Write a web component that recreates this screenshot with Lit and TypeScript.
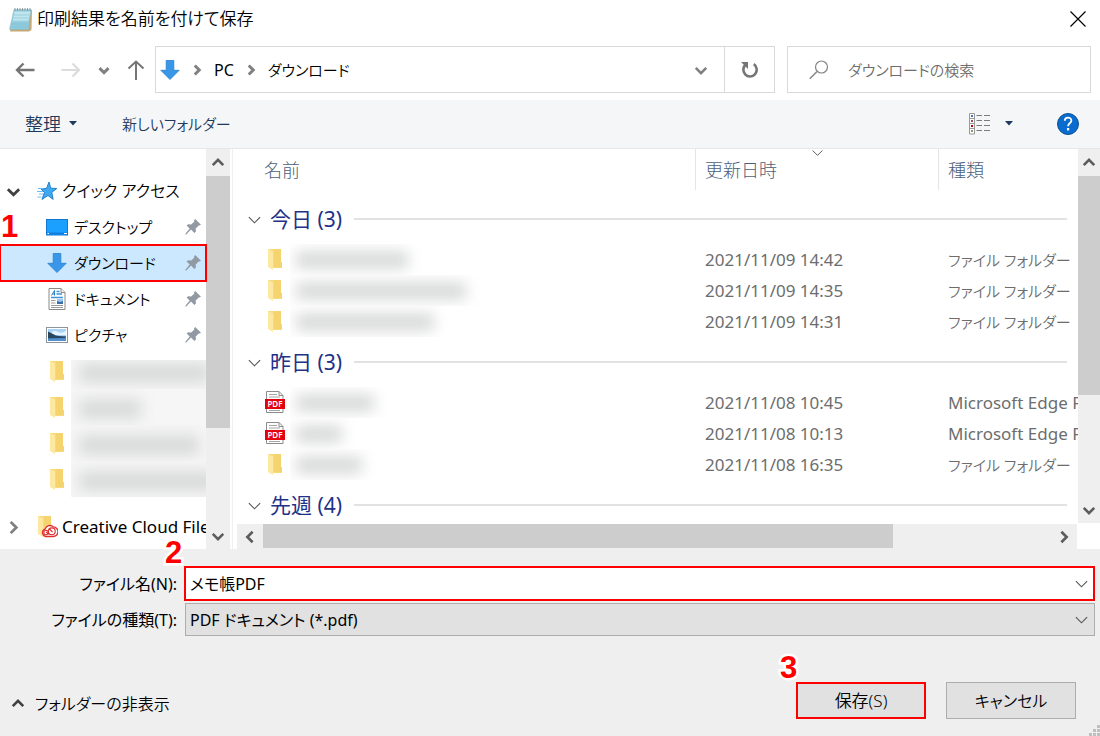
import { LitElement, html, css, svg, nothing } from "lit";
import { customElement, state } from "lit/decorators.js";
import { classMap } from "lit/directives/class-map.js";

type Icon = "folder" | "pdf";
interface FileRow { icon: Icon; blur: number; date: string; type: string; }
interface Group { name: string; rows: FileRow[]; }

const FOLDER_TYPE = "ファイル フォルダー";
const PDF_TYPE = "Microsoft Edge PDF Document";

const GROUPS: Group[] = [
  {
    name: "今日 (3)",
    rows: [
      { icon: "folder", blur: 112, date: "2021/11/09 14:42", type: FOLDER_TYPE },
      { icon: "folder", blur: 170, date: "2021/11/09 14:35", type: FOLDER_TYPE },
      { icon: "folder", blur: 138, date: "2021/11/09 14:31", type: FOLDER_TYPE },
    ],
  },
  {
    name: "昨日 (3)",
    rows: [
      { icon: "pdf", blur: 78, date: "2021/11/08 10:45", type: PDF_TYPE },
      { icon: "pdf", blur: 46, date: "2021/11/08 10:13", type: PDF_TYPE },
      { icon: "folder", blur: 66, date: "2021/11/08 16:35", type: FOLDER_TYPE },
    ],
  },
  { name: "先週 (4)", rows: [] },
];

const chevron = (dir: "up" | "down" | "left" | "right", cls = "") => {
  const d = {
    up: "M2 10.5 L8 4.5 L14 10.5",
    down: "M2 5.5 L8 11.5 L14 5.5",
    left: "M11 2 L5 8 L11 14",
    right: "M5 2 L11 8 L5 14",
  }[dir];
  return html`<svg class="chev ${cls}" viewBox="0 0 16 16" aria-hidden="true"><path d=${d} /></svg>`;
};

const downArrow = html`<svg width="20" height="20" viewBox="0 0 20 20" aria-hidden="true">
  <path d="M6.2 .5h7.6v9.8h5.4L10 19.5 .8 10.3h5.4z" fill="#3a97e8" stroke="#2580d2" stroke-width=".8" />
</svg>`;

const folderShape = svg`
  <path d="M2 0h13v13h1v6H5z" fill="#f8da7c" />
  <path d="M8 0h7v13h1v5H8z" fill="#f3cf66" opacity=".6" />
  <path d="M2 0l5 2.500v18.500L2 18z" fill="#fde8a2" />`;

const folderIcon = html`<svg width="18" height="22" viewBox="0 0 18 22" aria-hidden="true">${folderShape}</svg>`;

const pdfIcon = html`<svg class="pdf" width="20" height="23" viewBox="0 0 20 23" aria-hidden="true">
  <path d="M1.5 .5h12.500l4 4v17h-16.500z" fill="#fff" stroke="#8b8b8b" />
  <path d="M14 .5v4h4" fill="none" stroke="#8b8b8b" />
  <path d="M4 3.500h8M4 6h11M4 19.500h11" stroke="#a5a5a5" />
  <rect x="0" y="8" width="20" height="10" fill="#e3000f" />
  <text x="10" y="16" text-anchor="middle" font-size="8" font-weight="600" fill="#fff">PDF</text>
</svg>`;

const pinIcon = html`<svg class="pin" width="16" height="16" viewBox="0 0 16 16" aria-hidden="true">
  <path d="M10.200 0 16 5.800l-1.500.8-.8-.2-3 3 .2 3-1.500 1.500-3.400-3.300L1 15.700.2 15l4.500-5.400L1.600 6.600l1.500-1.400 3.100.2 3.200-3-.4-1.200z" fill="#919aa3" />
</svg>`;

const starIcon = html`<svg width="20" height="20" viewBox="0 0 20 20" aria-hidden="true">
  <path d="M12 1l1.800 6.200 6 .3-5 3.900 1.400 7-5.200-3.900-6 3.900 2.400-6.900L4 8l5.500-.6z" fill="#3fa9f0" stroke="#1a78c8" stroke-width=".9" />
  <path d="M1 7.500h5M0 10.500h6M2 13h4M.5 16h4" stroke="#6cbdf2" stroke-width="1" />
</svg>`;

const desktopIcon = html`<svg width="22" height="17" viewBox="0 0 22 17" aria-hidden="true">
  <rect x=".5" y=".5" width="21" height="15.500" fill="#1ba0ff" stroke="#1278d0" />
  <path d="M1 13.500h20v2H1z" fill="#0d7fe0" />
  <path d="M1.500 14.500h1.500M18 14.500h3" stroke="#fff" stroke-width="1" />
</svg>`;

const docIcon = html`<svg width="18" height="22" viewBox="0 0 18 22" aria-hidden="true">
  <path d="M1 .5h12l4 4v17H1z" fill="#fff" stroke="#8a8a8a" />
  <path d="M13 .5v4h4" fill="#eee" stroke="#8a8a8a" />
  <path d="M3.500 7.500 6.500 2.500M6.500 2.500v5M4.500 6h2" stroke="#2b7fc4" fill="none" />
  <path d="M8.500 3.500h3M8.500 6h5.500M3 9.500h12" stroke="#3f93d6" stroke-width="1.300" />
  <path d="M3 12.500h4.500M3 15h4.500M3 17.500h12M3 19.500h12" stroke="#9a9a9a" />
  <rect x="9" y="11" width="6" height="5" fill="#3a6ea5" />
  <path d="M9 13l3 1 3-1v-2H9z" fill="#9cc8ee" />
</svg>`;

const pictureIcon = html`<svg width="22" height="16" viewBox="0 0 22 16" aria-hidden="true">
  <rect x=".5" y=".5" width="21" height="15" fill="#fff" stroke="#8d949b" />
  <rect x="2" y="2" width="18" height="12" fill="#a9d3f5" />
  <path d="M6 5q3-2 6 0t8-1v4H6z" fill="#e8f4fd" />
  <path d="M2 9h18v5H2z" fill="#3d78b4" />
  <path d="M2 4.500 5 6l5 2.500 9 1.500v1H2z" fill="#28475c" />
  <path d="M2 12l18-1v3H2z" fill="#5590cc" />
</svg>`;

const notepadIcon = html`<svg width="24" height="25" viewBox="0 0 24 25" aria-hidden="true">
  <path d="M6 3h17l-.5 20-2.500 1.500H1z" fill="#c9a878" />
  <path d="M5 2.500h17L19.500 22.500H.5z" fill="#8fcbdc" stroke="#7fb4c4" stroke-width=".5" />
  <path d="M5.500 4.500h16l-2 10H3.500z" fill="#bfe6ee" />
  <path d="M5 8h15.500M4.500 11h15.500M4 14h15.500M3 17h15.500M2.500 20h16" stroke="#7fc2d4" stroke-width=".6" />
  <path d="M6 1v3M8.500 1v3M11 1v3M13.500 1v3M16 1v3M18.500 1v3M21 1v3" stroke="#8f9ca2" />
</svg>`;

const creativeIcon = html`<svg width="22" height="22" viewBox="0 0 22 22" aria-hidden="true">
  ${folderShape}
  <g fill="none" stroke="#e02d2d">
    <path d="M9.500 20.500a4 4 0 0 1-.3-7.600 5 5 0 0 1 8.200-2 4.800 4.800 0 0 1-.4 9.600z" fill="#fff" stroke-width="1.300" />
    <circle cx="10" cy="16.500" r="2.200" stroke-width="1.100" />
    <circle cx="15.800" cy="15.300" r="3.400" stroke-width="1.100" />
    <path d="M10 16l3.500 2.500M13 12.500l3.500 3.500" stroke-width="1.100" />
  </g>
</svg>`;

const viewIcon = html`<svg width="22" height="22" viewBox="0 0 22 22" aria-hidden="true">
  <path d="M.5.5h5v20.500h-5zM.5 5.500h5M.5 10.500h5M.5 15.500h5" fill="#fff" stroke="#9a9a9a" />
  <path d="M2 3h2" stroke="#3c76c0" stroke-width="2" />
  <path d="M2 8h2" stroke="#a05050" stroke-width="2" />
  <path d="M2 13h2" stroke="#c00000" stroke-width="2" />
  <path d="M2 18h2" stroke="#8a9a70" stroke-width="2" />
  <path d="M7.500 2.500h5.500M15 2.500h6M7.500 7.500h5.500M15 7.500h6M7.500 12.500h5.500M15 12.500h6M7.500 17.500h5.500M15 17.500h6" stroke="#7c7c7c" />
</svg>`;

const caret = html`<svg width="8" height="5" viewBox="0 0 8 5" aria-hidden="true"><path d="M0 0h8L4 4.500z" fill="#1e395b" /></svg>`;

@customElement("app-root")
export class AppRoot extends LitElement {
  @state() private selected = "ダウンロード";

  static styles = css`
    :host {
      display: block;
      font: 350 16px/24px "Noto Sans", "Noto Sans CJK JP", sans-serif;
      font-feature-settings: "palt";
      color: #000;
      background: #efefef;
    }
    * { box-sizing: border-box; }
    button, input, select {
      font: inherit;
      font-feature-settings: inherit;
      color: inherit;
      background: none;
      border: 0;
      border-radius: 0;
      margin: 0;
      padding: 0;
    }
    button { display: inline-flex; align-items: center; justify-content: center; white-space: nowrap; }
    svg { display: block; flex: none; }
    h1 { font: inherit; margin: 0; }
    .dialog { display: flex; flex-direction: column; min-height: 100vh; }
    .chev { width: 14px; height: 14px; fill: none; stroke: #5c5c5c; stroke-width: 3; }
    .thin { stroke-width: 1.2; stroke: #555; }
    .small { width: 12px; height: 12px; stroke-width: 4; }
    .dark { stroke: #404040; }

    .title { display: flex; align-items: center; gap: 4px; height: 38px; padding: 0 14px 0 9px; background: #fff; }
    .title h1 { flex: 1; font-size: 17px; }

    .nav { display: flex; align-items: stretch; padding: 8px 9px 7px 0; background: #fff; }
    .history { display: grid; grid-template-columns: 50px 41px 26px 38px; align-items: center; }
    .history button { height: 47px; }
    .address { flex: 1; display: flex; height: 47px; border: 1px solid #d9d9d9; margin-right: 12px; }
    .crumbs { flex: 1; display: flex; align-items: center; gap: 11px; padding-left: 4px; }
    .crumbs .chev, .gray { stroke: #808080; }
    .drop { width: 47px; }
    .refresh { width: 50px; border-left: 1px solid #d9d9d9; }
    .search { display: flex; align-items: center; gap: 19px; width: 304px; height: 47px; padding: 0 21px; border: 1px solid #d9d9d9; }
    .search input { flex: 1; min-width: 0; height: 30px; outline: 0; }
    .search input::placeholder { color: #6d6d6d; opacity: 1; }
    .kana, .child, .search input, .row td { font-size: 15px; }

    .toolbar { display: flex; align-items: center; height: 49px; padding: 0 21px 1px 25px; background: #f5f6f8; border-bottom: 1px solid #e5e7ea; color: #1e395b; }
    .toolbar button { gap: 8px; }
    .toolbar .organize { margin-right: 45px; font-size: 18px; }
    .view { margin-left: auto; margin-right: 44px; }
    .toolbar .view { gap: 14px; }
    .help { width: 22px; height: 22px; }

    .main { display: flex; height: 400px; background: #fff; }
    .side { display: flex; width: 233px; border-right: 1px solid #f0f0f0; }
    .tree { flex: 1; min-width: 0; padding: 24px 0 0; margin: 0; list-style: none; }
    .tree li { position: relative; display: flex; height: 36px; }
    .tree li.gap { margin-top: 12px; font-size: 17px; font-weight: 400; }
    .node { display: flex; flex: 1; min-width: 0; height: 36px; align-items: center; justify-content: flex-start; }
    .root { padding-left: 6px; }
    .exp { flex: none; width: 30px; }
    .exp .chev { width: 15px; height: 15px; }
    .ico { display: flex; flex: none; justify-content: center; }
    .root .ico { width: 22px; margin-right: 4px; }
    .root .label { overflow: hidden; }
    .child { padding: 0 5px 0 45px; }
    .child .ico { width: 23px; margin-right: 6px; }
    .child .label { flex: 1; text-align: left; }
    .sel { background: #cce8ff; outline: 2px solid #f00; outline-offset: -1px; }

    .smudge { height: 36px; flex: 1; overflow: hidden; background: #f6f6f6; margin-left: -3px; margin-right: -5px; }
    .smudge i { display: block; height: 20px; margin: 10px 0 0 8px; background: #d9dada; filter: blur(7px); }
    .tree .hidden .ico { padding-top: 2px; }
    .hidden.first .smudge { height: 29px; align-self: flex-end; }
    .hidden.first .smudge i { margin-top: 3px; }

    .vbar { display: flex; flex-direction: column; background: #efefef; }
    .side .vbar { width: 24px; margin-right: 2px; }
    .vbar button { height: 27px; }
    .thumb { background: #cdcdcd; }
    .spacer { flex: 1; }
    .side .thumb { height: 252px; }

    .files { flex: 1; min-width: 0; display: grid; grid-template-columns: minmax(0, 1fr) 22px; grid-template-rows: 375px 25px; padding-left: 4px; }
    .list { overflow: hidden; }
    .files .vbar { margin-bottom: 1px; }
    .files .thumb { height: 219px; }
    .hbar { display: flex; background: #efefef; margin-right: 1px; }
    .hbar button { width: 26px; }
    .files .hbar .thumb { flex: 4; height: 24px; }
    .corner { background: #fff; }

    table { border-collapse: collapse; table-layout: fixed; width: 100%; color: #6d6d6d; }
    .c-name { width: 458px; }
    .c-date { width: 243px; }
    th, td { padding: 0; text-align: left; font-weight: inherit; white-space: nowrap; }
    thead th { height: 45px; color: #4c607a; font-size: 18px; font-weight: 300; vertical-align: top; }
    .head { position: relative; display: flex; align-items: center; height: 41px; padding-left: 9px; border-left: 1px solid #e5e5e5; }
    .c-name .head { padding-left: 27px; border: 0; }
    .sort { position: absolute; top: -3px; left: calc(50% - 6px); width: 13px; height: 13px; }
    .group { display: flex; align-items: center; height: 50px; padding-right: 11px; color: #1e3287; font-size: 21px; }
    .group button { gap: 8px; padding-left: 10px; font-weight: 400; }
    .group::after { content: ""; flex: 1; height: 2px; margin-left: 12px; background: #e2e2e2; }
    .group .chev { width: 15px; height: 15px; }
    .row td { height: 31px; padding-left: 10px; }
    .row .latin { font-size: 17px; }
    .latin { font-weight: 400; }
    .row .cell { padding-left: 28px; }
    .file { display: flex; align-items: center; height: 31px; }
    .file svg { width: 20px; }
    .file .smudge { height: 31px; margin: 0 0 0 5px; background: none; }
    .file .smudge i { height: 18px; margin: 7px 0 0 6px; }
    .pdf { font-family: "Noto Sans", sans-serif; }

    .form { position: relative; display: grid; grid-template-columns: 177px minmax(0, 1fr); column-gap: 7px; row-gap: 2px; align-items: center; padding: 17px 5px 0 0; font-weight: 400; }
    .form label { text-align: right; white-space: nowrap; }
    .combo { display: flex; height: 35px; background: #fff; border: 2px solid #f00; }
    .combo input { flex: 1; min-width: 0; padding-left: 4px; outline: 0; }
    .combo button { width: 24px; }
    .pick { display: grid; grid-template-columns: minmax(0, 1fr) 28px; align-items: center; margin-left: 1px; }
    .pick select { grid-area: 1 / 1 / 2 / 3; height: 33px; padding-left: 4px; appearance: none; border: 1px solid #adadad; background: #e1e1e1; }
    .pick svg { grid-area: 1 / 2; justify-self: center; pointer-events: none; }
    .form .chev { width: 15px; height: 15px; }

    .foot { position: relative; display: flex; align-items: center; gap: 20px; padding: 46px 24px 17px 11px; }
    .hide { gap: 10px; margin-right: auto; padding-top: 6px; }
    .act { position: relative; width: 130px; height: 37px; background: #e1e1e1; border: 1px solid #adadad; }
    .act.save { border: 2px solid #f00; font-size: 17px; }
    .grip { position: absolute; right: 0; bottom: 0; }

    .step { position: absolute; font: bold 31px/32px "Liberation Sans", sans-serif; color: #f00; -webkit-text-stroke: 5px #fff; paint-order: stroke fill; z-index: 1; pointer-events: none; }
    .one { left: 1px; top: 2px; }
    .two { left: 165px; top: -12px; }
    .three { left: -18px; top: -32px; }
  `;

  private child(name: string, icon: unknown) {
    const on = this.selected === name;
    return html`<li>
      <button class=${classMap({ node: true, child: true, sel: on })} @click=${() => (this.selected = name)}>
        <span class="ico">${icon}</span><span class="label">${name}</span>${pinIcon}
      </button>
      ${name === "デスクトップ" ? html`<span class="step one">1</span>` : nothing}
    </li>`;
  }

  private vbar() {
    return html`<div class="vbar">
      <button aria-label="上へスクロール">${chevron("up")}</button>
      <div class="thumb"></div><div class="spacer"></div>
      <button aria-label="下へスクロール">${chevron("down")}</button>
    </div>`;
  }

  private group(g: Group) {
    return html`<tbody>
      <tr><th colspan="3" scope="rowgroup">
        <div class="group"><button>${chevron("down", "thin")}${g.name}</button></div>
      </th></tr>
      ${g.rows.map((r) => html`<tr class="row">
        <td class="cell"><div class="file">
          ${r.icon === "pdf" ? pdfIcon : folderIcon}
          <span class="smudge"><i style="width:${r.blur}px"></i></span>
        </div></td>
        <td class="latin">${r.date}</td>
        <td class=${classMap({ latin: r.icon === "pdf" })}>${r.type}</td>
      </tr>`)}
    </tbody>`;
  }

  render() {
    return html`<div class="dialog">
      <header class="title">
        ${notepadIcon}
        <h1>印刷結果を名前を付けて保存</h1>
        <button aria-label="閉じる">
          <svg width="16" height="16" viewBox="0 0 16 16"><path d="M.5.5l15 15M15.500.5l-15 15" stroke="#000" stroke-width="1.200" /></svg>
        </button>
      </header>

      <nav class="nav">
        <div class="history">
          <button aria-label="戻る"><svg width="20" height="16" viewBox="0 0 20 16"><path d="M8.500 1.500 2 8l6.500 6.500M2 8h17.500" fill="none" stroke="#757575" stroke-width="2.400" /></svg></button>
          <button aria-label="進む"><svg width="20" height="16" viewBox="0 0 20 16"><path d="M11.500 1.500 18 8l-6.500 6.500M18 8H.5" fill="none" stroke="#dcdcdc" stroke-width="2.200" /></svg></button>
          <button aria-label="最近表示した場所">${chevron("down", "small gray")}</button>
          <button aria-label="上へ"><svg width="18" height="20" viewBox="0 0 18 20"><path d="M1.500 8.500 9 1.500l7.500 7M9 1.500V20" fill="none" stroke="#757575" stroke-width="2" /></svg></button>
        </div>
        <div class="address">
          <div class="crumbs">
            ${downArrow}${chevron("right", "small")}<span class="latin">PC</span>${chevron("right", "small")}<span class="kana">ダウンロード</span>
          </div>
          <button class="drop" aria-label="以前の場所">${chevron("down", "gray")}</button>
          <button class="refresh" aria-label="最新の情報に更新">
            <svg width="18" height="18" viewBox="0 0 18 18"><path d="M12.800 3.200A6.700 6.700 0 1 1 5 3.400" fill="none" stroke="#757575" stroke-width="2.600" /><path d="M0 1h7v7z" fill="#757575" /></svg>
          </button>
        </div>
        <div class="search">
          <svg width="20" height="20" viewBox="0 0 20 20"><circle cx="12.500" cy="7" r="6" fill="none" stroke="#858585" stroke-width="1.200" /><path d="M8 11.500.8 18.700" stroke="#858585" stroke-width="1.500" /></svg>
          <input type="search" aria-label="検索" placeholder="ダウンロードの検索" />
        </div>
      </nav>

      <div class="toolbar">
        <button class="organize">整理 ${caret}</button>
        <button class="kana">新しいフォルダー</button>
        <button class="view" aria-label="表示方法の変更">${viewIcon}${caret}</button>
        <button class="help" aria-label="ヘルプ">
          <svg width="22" height="22" viewBox="0 0 22 22"><circle cx="11" cy="11" r="10.500" fill="#0a6cce" stroke="#0a4f96" /><path d="M7.800 7.800c0-4.200 6.600-4 6.600-.4 0 2.600-3.300 2.700-3.300 5.800" fill="none" stroke="#fff" stroke-width="1.800" /><rect x="10" y="15" width="2.200" height="2.400" fill="#fff" /></svg>
        </button>
      </div>

      <main class="main">
        <div class="side">
          <ul class="tree">
            <li><button class="node root"><span class="exp">${chevron("down", "dark")}</span><span class="ico">${starIcon}</span><span class="label">クイック アクセス</span></button></li>
            ${this.child("デスクトップ", desktopIcon)}
            ${this.child("ダウンロード", downArrow)}
            ${this.child("ドキュメント", docIcon)}
            ${this.child("ピクチャ", pictureIcon)}
            ${[130, 62, 120, 140].map((w, i) => html`<li><div class=${classMap({ node: true, child: true, hidden: true, first: i === 0 })}><span class="ico">${folderIcon}</span><span class="smudge"><i style="width:${w}px"></i></span></div></li>`)}
            <li class="gap"><button class="node root"><span class="exp">${chevron("right", "gray")}</span><span class="ico">${creativeIcon}</span><span class="label">Creative Cloud Files</span></button></li>
          </ul>
          ${this.vbar()}
        </div>
        <div class="files">
          <div class="list">
            <table>
              <thead><tr>
                <th class="c-name" scope="col"><div class="head">名前</div></th>
                <th class="c-date" scope="col"><div class="head">更新日時${chevron("down", "thin sort")}</div></th>
                <th scope="col"><div class="head">種類</div></th>
              </tr></thead>
              ${GROUPS.map((g) => this.group(g))}
            </table>
          </div>
          ${this.vbar()}
          <div class="hbar">
            <button aria-label="左へスクロール">${chevron("left")}</button>
            <div class="thumb"></div><div class="spacer"></div>
            <button aria-label="右へスクロール">${chevron("right")}</button>
          </div>
          <div class="corner"></div>
        </div>
      </main>

      <form class="form" @submit=${(e: Event) => e.preventDefault()}>
        <span class="step two">2</span>
        <label for="name">ファイル名(N):</label>
        <div class="combo">
          <input id="name" type="text" value="メモ帳PDF" />
          <button type="button" aria-label="候補を表示">${chevron("down", "thin")}</button>
        </div>
        <label for="kind">ファイルの種類(T):</label>
        <div class="pick">
          <select id="kind"><option>PDF ドキュメント (*.pdf)</option></select>
          ${chevron("down", "thin")}
        </div>
      </form>

      <footer class="foot">
        <button class="hide">${chevron("up", "dark")}フォルダーの非表示</button>
        <button class="act save"><span class="step three">3</span>保存(S)</button>
        <button class="act">キャンセル</button>
        <svg class="grip" width="12" height="12" viewBox="0 0 12 12" aria-hidden="true"><path d="M9 1h3v3H9zM5 5h3v3H5zM9 5h3v3H9zM1 9h3v3H1zM5 9h3v3H5zM9 9h3v3H9z" fill="#bfbfbf" /></svg>
      </footer>
    </div>`;
  }
}
